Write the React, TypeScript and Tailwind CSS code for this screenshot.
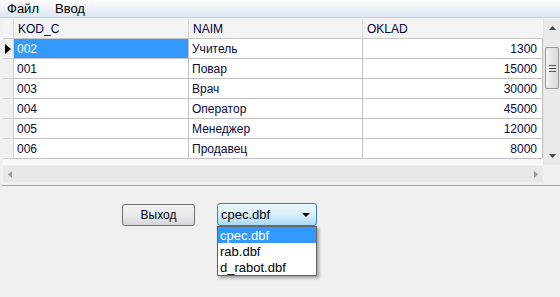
import React from "react";

const rows = [
  { k: "002", n: "Учитель", o: "1300" },
  { k: "001", n: "Повар", o: "15000" },
  { k: "003", n: "Врач", o: "30000" },
  { k: "004", n: "Оператор", o: "45000" },
  { k: "005", n: "Менеджер", o: "12000" },
  { k: "006", n: "Продавец", o: "8000" },
];

export default function App() {
  return (
    <div
      className="w-[560px] h-[297px] overflow-hidden bg-[#f0f0f0] flex flex-col text-[12px] leading-none text-black"
      style={{ fontFamily: '"Liberation Sans", Arial, sans-serif' }}
    >
      {/* Menu bar */}
      <div className="h-[18px] shrink-0 flex items-center gap-[16px] pl-[7px] bg-gradient-to-b from-[#fbfcfe] to-[#dfe7f2] border-b border-[#c5cfdd] text-[13px]">
        <span>Файл</span>
        <span>Ввод</span>
      </div>

      {/* Grid area */}
      <div className="h-[168px] shrink-0 flex flex-col border-l-[3px] border-l-[#f0f0f0] border-b border-b-[#a0a0a0] bg-[#f0f0f0] pt-[1px]">
        <div className="flex">
          <div className="w-[540px] flex flex-col bg-[#f7f7f7]">
            {/* header */}
            <div className="flex h-[20px] bg-[#f4f4f4] border-b border-[#c8c8c8] text-[#000040]">
              <div className="w-[11px] border-r border-[#d8d8d8]" />
              <div className="w-[175px] pl-[4px] flex items-center border-r border-[#d8d8d8]">KOD_C</div>
              <div className="w-[174px] pl-[4px] flex items-center border-r border-[#d8d8d8]">NAIM</div>
              <div className="w-[180px] pl-[4px] flex items-center">OKLAD</div>
            </div>
            {rows.map((r, i) => (
              <div key={r.k} className="flex h-[20px] text-[#0a0a40]">
                <div className="w-[11px] bg-[#f0f0f0] border-r border-b border-[#d0d0d0] flex items-center justify-center">
                  {i === 0 && (
                    <svg width="6" height="10" viewBox="0 0 6 10">
                      <path d="M0 0 L6 5 L0 10 Z" fill="#000" />
                    </svg>
                  )}
                </div>
                <div
                  className={
                    i === 0
                      ? "w-[175px] pl-[3px] flex items-center bg-[#3399ff] text-white border-r border-b border-[#c0c0c0]"
                      : "w-[175px] pl-[3px] flex items-center bg-white border-r border-b border-[#c0c0c0]"
                  }
                >
                  {r.k}
                </div>
                <div className="w-[174px] pl-[3px] flex items-center bg-white border-r border-b border-[#c0c0c0]">
                  {r.n}
                </div>
                <div className="w-[180px] pr-[5px] flex items-center justify-end bg-white border-r border-b border-[#c0c0c0]">
                  {r.o}
                </div>
              </div>
            ))}
            <div className="h-[6px]" />
          </div>
          {/* vertical scrollbar */}
          <div className="w-[17px] flex flex-col bg-[#eaeaea] border-l border-[#e4e4e4]">
            <div className="h-[18px] flex items-center justify-center">
              <svg width="7" height="4" viewBox="0 0 7 4">
                <path d="M3.5 0 L7 4 L0 4 Z" fill="#4a4a4a" />
              </svg>
            </div>
            <div className="mx-[1px] h-[42px] mt-[10px] rounded-[2px] border border-[#9a9a9a] bg-gradient-to-r from-[#f3f3f3] to-[#d9d9d9] flex flex-col items-center justify-center gap-[2px]">
              <div className="w-[7px] h-[1px] bg-[#555]" />
              <div className="w-[7px] h-[1px] bg-[#555]" />
              <div className="w-[7px] h-[1px] bg-[#555]" />
            </div>
            <div className="flex-1" />
            <div className="h-[18px] flex items-center justify-center">
              <svg width="7" height="4" viewBox="0 0 7 4">
                <path d="M0 0 L7 0 L3.5 4 Z" fill="#4a4a4a" />
              </svg>
            </div>
          </div>
        </div>
        {/* horizontal scrollbar */}
        <div className="flex mt-[1px]">
          <div className="w-[540px] h-[16px] bg-[#e8e8e8] flex items-center justify-between px-[5px]">
            <svg width="4" height="7" viewBox="0 0 4 7">
              <path d="M4 0 L4 7 L0 3.5 Z" fill="#9a9a9a" />
            </svg>
            <svg width="4" height="7" viewBox="0 0 4 7">
              <path d="M0 0 L4 3.5 L0 7 Z" fill="#9a9a9a" />
            </svg>
          </div>
        </div>
      </div>

      {/* bottom form */}
      <div className="flex-1 flex items-start pt-[17px] pl-[122px] gap-[22px]">
        <div className="w-[73px] h-[22px] mt-[1px] rounded-[3px] border border-[#707070] bg-gradient-to-b from-[#f2f2f2] via-[#ebebeb] to-[#d6d6d6] flex items-center justify-center">
          Выход
        </div>
        <div className="relative w-[100px]">
          <div className="h-[23px] rounded-[3px] border border-[#3c7fb1] bg-gradient-to-b from-[#eaf6fd] via-[#d9f0fc] to-[#a7d9f5] flex items-center justify-between pl-[3px] pr-[6px] text-[13px]">
            <span>cpec.dbf</span>
            <svg width="8" height="4" viewBox="0 0 8 4">
              <path d="M0 0 L8 0 L4 4 Z" fill="#000" />
            </svg>
          </div>
          <div className="absolute left-0 top-[23px] w-[100px] bg-white border border-[#646464] shadow-[2px_2px_3px_rgba(0,0,0,0.35)] flex flex-col text-[13px]">
            <div className="h-[16px] pl-[2px] flex items-center bg-[#3399ff] text-white">cpec.dbf</div>
            <div className="h-[16px] pl-[2px] flex items-center">rab.dbf</div>
            <div className="h-[16px] pl-[2px] flex items-center">d_rabot.dbf</div>
          </div>
        </div>
      </div>
    </div>
  );
}
